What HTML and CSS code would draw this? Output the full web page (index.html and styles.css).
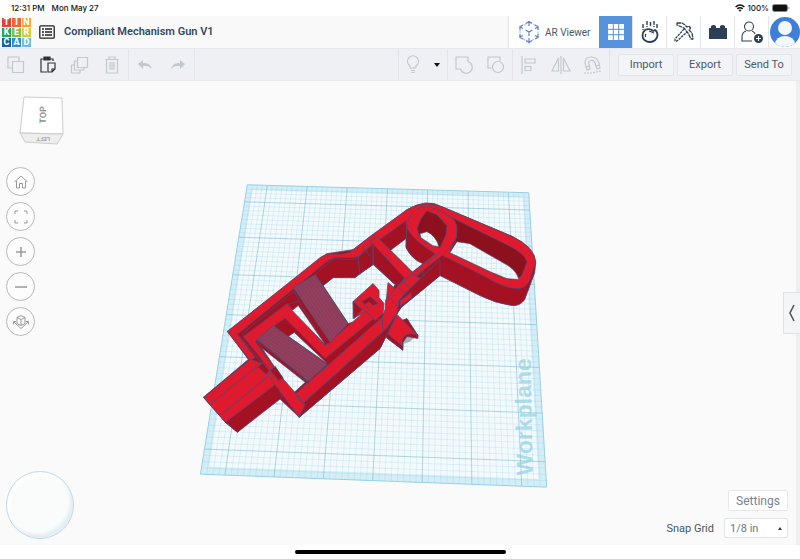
FILE: index.html
```
<!DOCTYPE html>
<html lang="en">

<head>
    <meta charset="UTF-8">
    <meta name="viewport" content="width=device-width, initial-scale=1.0">
    <title>Compliant Mechanism Gun V1</title>
    <link rel="stylesheet" href="styles.css">
</head>

<body>
    <div class="status-bar">
        <span class="time">12:31 PM</span>
        <span class="date">Mon May 27</span>
        <svg class="wifi" width="10" height="8" viewBox="0 0 10 8" fill="none" stroke="#111" stroke-width="1.5">
            <path d="M.6 3Q5-1 9.4 3M2.3 4.9Q5 2.6 7.7 4.9" />
            <path d="M3.6 6.2Q5 5 6.4 6.2L5 7.8z" fill="#111" stroke="none" />
        </svg>
        <span>100%</span>
        <svg width="18" height="8" viewBox="0 0 18 8">
            <rect x=".5" y=".5" width="15" height="7" rx="2" fill="#111" stroke="#888" />
            <path d="M16.5 2.5v3q1-.4 1-1.5t-1-1.5" fill="#888" />
        </svg>
    </div>

    <header class="header">
        <a href="#" class="logo" aria-label="Tinkercad">
            <span class="t1">T</span><span class="t2">I</span><span class="t3">N</span>
            <span class="t4">K</span><span class="t5">E</span><span class="t6">R</span>
            <span class="t7">C</span><span class="t8">A</span><span class="t9">D</span>
        </a>
        <button class="icon-btn list-btn" aria-label="Designs">
            <svg width="16" height="14" viewBox="0 0 16 14" fill="none" stroke="#222">
                <rect x=".8" y=".8" width="14.4" height="12.4" rx="1" stroke-width="1.3" />
                <path d="M3 4h2M3 7h2M3 10h2M6 4h7M6 7h7M6 10h7" stroke-width="1.6" />
            </svg>
        </button>
        <h1>Compliant Mechanism Gun V1</h1>
        <button class="ar-btn">
            <svg width="22" height="24" viewBox="0 0 22 24" fill="none" stroke="#5b83c9" stroke-width="1.2">
                <path d="M11 2L20 7V17L11 22L2 17V7z" stroke="#a9c6ea" stroke-dasharray="3 2" />
                <path d="M8 3.5L11 1.5L14 3.5M11 2V6M2 10V6.500L5 5M2 7L5 8.500M20 10V6.500L17 5M20 7L17 8.500M2 14V17.500L5 19M2 17L5 15.500M20 14V17.500L17 19M20 17L17 15.500M8 20.500L11 22.500L14 20.500M11 22V18M7.500 10L11 12L14.500 10M11 12V16" />
            </svg>
            <span>AR Viewer</span>
        </button>
        <button class="tab active" aria-label="3D view">
            <svg width="18" height="18" viewBox="0 0 18 18">
                <rect x="1" y="1" width="16" height="16" fill="#fff" />
                <path d="M1 6.300H17M1 11.700H17M6.300 1V17M11.700 1V17" stroke="#4f8fd9" stroke-width="1" />
            </svg>
        </button>
        <button class="tab" aria-label="Sim lab">
            <svg width="20" height="24" viewBox="0 0 20 24" fill="none" stroke="#2b4056" stroke-width="1.800">
                <path d="M11 9.500C6 8 2.500 11 2.500 15.500c0 4 3.500 6.500 7.500 6.500s7.500-3 7.500-7c0-2-1-4-2.500-5L13 11z" />
                <path d="M6 14q-1 1-.5 3M9 11l5 2" stroke-width="1.300" />
                <path d="M3 4v6M7 1v6M10.500 2v4M14 1v6M17 4v4" stroke-dasharray="4 1" stroke-width="1.400" />
            </svg>
        </button>
        <button class="tab" aria-label="Blocks">
            <svg width="22" height="22" viewBox="0 0 22 22" fill="none" stroke="#2b4056" stroke-width="1.300" stroke-linejoin="bevel">
                <path d="M4 2H9L12 4L14 6L16 5L17.500 7L16 9L19 12L20 18H18L15 12L11 7L4 4z" stroke-dasharray="4 .6" />
                <path d="M11 8L2 18V20H4L14 11" stroke-dasharray="2.500 .8" />
            </svg>
        </button>
        <button class="tab" aria-label="Bricks">
            <svg width="20" height="16" viewBox="0 0 20 16" fill="#2b4056">
                <path d="M1 4H3V2Q5.500 0 8 2V4H12V2Q14.500 0 17 2V4H19V15H1z" />
            </svg>
        </button>
        <button class="tab" aria-label="Invite people">
            <svg width="24" height="24" viewBox="0 0 24 24" fill="none" stroke="#2b4056" stroke-width="1.100">
                <circle cx="9" cy="6.500" r="4.500" />
                <path d="M12 21H2V17Q2 12.500 6 11M12 11Q14.500 12 15 14" />
                <circle cx="18.500" cy="18.500" r="4.500" fill="#2b4056" stroke="none" />
                <path d="M18.500 16V21M16 18.500H21" stroke="#fff" />
            </svg>
        </button>
        <button class="tab avatar" aria-label="Account">
            <svg width="30" height="32" viewBox="0 0 30 32">
                <defs>
                    <clipPath id="face"><circle cx="15" cy="16" r="15" /></clipPath>
                </defs>
                <g clip-path="url(#face)">
                    <rect width="30" height="32" fill="#3f7fdb" />
                    <circle cx="15" cy="12" r="7" fill="#f3f8ff" />
                    <ellipse cx="15" cy="28" rx="10" ry="8" fill="#f3f8ff" />
                </g>
            </svg>
        </button>
    </header>

    <div class="toolbar">
        <div class="group edit">
            <button class="tool" aria-label="Copy">
                <svg viewBox="0 0 20 20"><path d="M6 13H2V2H13V6M6.500 6.500H17.500V17.500H6.500z" /></svg>
            </button>
            <button class="tool dark" aria-label="Paste">
                <svg viewBox="0 0 20 20"><path d="M9 17H3V4H15V6M10 8H17V14L14 17H10zM14 17V14H17" /><path d="M6 2H12V5H6z" fill="#333" /></svg>
            </button>
            <button class="tool" aria-label="Duplicate">
                <svg viewBox="0 0 20 20"><path d="M7.500 2.500H17.500V12.500H7.500zM7 6H4.500V15H14V13M4 10H1.500V18H10V15" /></svg>
            </button>
            <button class="tool" aria-label="Delete">
                <svg viewBox="0 0 20 20"><path d="M3 4.500H17M7 4V2H13V4M4.500 5V18H15.500V5M8 7V15M10 7V15M12 7V15" /></svg>
            </button>
        </div>
        <div class="group history">
            <button class="tool" aria-label="Undo">
                <svg viewBox="0 0 20 20"><path d="M3 9L8 5V8Q15 7 17 14Q13 10 8 11V14z" fill="#c2c8d0" stroke="none" /></svg>
            </button>
            <button class="tool" aria-label="Redo">
                <svg viewBox="0 0 20 20"><path d="M17 9L12 5V8Q5 7 3 14Q7 10 12 11V14z" fill="#c2c8d0" stroke="none" /></svg>
            </button>
        </div>
        <div class="spacer"></div>
        <div class="group show">
            <button class="tool" aria-label="Show all">
                <svg viewBox="0 0 20 20"><path d="M7.500 13Q7.500 11 5.500 9.500A5.500 5.500 0 1 1 14.500 9.500Q12.500 11 12.500 13zM8 15.500H12M8.500 17.500H11.500" /></svg>
            </button>
            <button class="caret" aria-label="Visibility options"><svg width="6" height="4" viewBox="0 0 6 4"><path d="M0 0H6L3 4z" fill="#111" /></svg></button>
        </div>
        <div class="group pair">
            <button class="tool" aria-label="Group">
                <svg viewBox="0 0 20 20"><path d="M2 2H14V6.500A6 6 0 1 1 6.500 14H2z" /></svg>
            </button>
            <button class="tool" aria-label="Ungroup">
                <svg viewBox="0 0 20 20"><path d="M6 13H2V2H14V6" /><circle cx="12" cy="12" r="5.500" /></svg>
            </button>
        </div>
        <div class="group align">
            <button class="tool" aria-label="Align">
                <svg viewBox="0 0 20 20"><path d="M3 1V19M6 4H16V8H6zM6 11.500H12V15.500H6z" /></svg>
            </button>
            <button class="tool" aria-label="Mirror">
                <svg viewBox="0 0 20 20"><path d="M10 1V19M7.500 3V16H1zM12.500 3V16H19z" /></svg>
            </button>
            <button class="tool" aria-label="Cruise">
                <svg viewBox="0 0 20 20"><path d="M4 15L2 8Q2 2 8 2Q14 2 16 8L17 13L14 14L12 8Q11 5 8 5.500Q5 6 6 9L7 14zM3 12L6 11M13 11L16 10" /><path d="M1 18H8L18 16" stroke-dasharray="2 1" /></svg>
            </button>
        </div>
        <div class="actions">
            <button>Import</button>
            <button>Export</button>
            <button>Send To</button>
        </div>
    </div>

    <main class="stage">
        <svg class="scene" viewBox="0 80 800 465" role="img" aria-label="Workplane with model">
            <defs>
                <pattern id="ribs-a" width="3" height="3" patternUnits="userSpaceOnUse" patternTransform="rotate(-33)">
                    <rect width="3" height="3" fill="#a8304c" />
                    <path d="M.7 0V3" stroke="#6f5072" stroke-width="1.300" />
                </pattern>
                <pattern id="ribs-b" width="3" height="3" patternUnits="userSpaceOnUse" patternTransform="rotate(-58)">
                    <rect width="3" height="3" fill="#a8304c" />
                    <path d="M.7 0V3" stroke="#6f5072" stroke-width="1.300" />
                </pattern>
                <pattern id="cells" width="5" height="5" patternUnits="userSpaceOnUse" patternTransform="rotate(2)">
                    <rect width="5" height="5" fill="#f3fafd" />
                    <path d="M0 .5H5M.5 0V5" stroke="#cfe5ed" stroke-width=".7" />
                </pattern>
            </defs>
            <g id="plane"></g>
            <text class="plane-label" transform="translate(533 475) rotate(-91)">Workplane</text>

            <g class="model">
                <path class="shadow" d="M386 334L402 344L410 341L418 334L400 330z" />
                <!-- latch -->
                <path class="side" d="M386 326L407 318L418 335V338L407 336L403 342V350L386 337z" />
                <path class="top" d="M387 322L397 314L418 335Q405 330 402 340L403 346L385 331z" />
                <!-- side walls -->
                <path class="side" d="M203 397L248 359L227 331L327 253L353 249L407 209Q427 197 442 206L513 236Q534 247 536 262L535 272L525 299Q520 306 512 305Q496 303 480 295L440 275L401 307L396 315L388 332L380 348L299 417L278 397L237 432L225 422z" />
                <!-- top faces of the frame -->
                <path class="top" d="M227 331L290 281L320 257Q326 252 333 253Q346 255 353 249L371 235L407 209Q419 202 430 203L442 206L513 236Q536 247 536 262L530 280Q526 288 518 288Q505 288 487 277L441 254L403 288L396 312L387 323L302 402L299 410L273 380L278 373L295 394L382 317Q386 313 385 306L388 299L398 285L405 277L373 243L358 256L352 257L335 257L328 260L237 334L255 357L250 360z" />
                <!-- finger loop opening -->
                <path class="side inner" d="M444 213L503 242Q527 253 527 262L522 275Q517 281 507 278L490 271L450 252L457 235z" />
                <path class="gap" d="M457 241L470 243L503 262Q517 269 519 279L507 278L490 271L450 252z" />
                <!-- opening left of the ring -->
                <path class="side" d="M378 240L406 220L407 246Q412 257 423 263L412 272z" />
                <path class="gap" d="M390 250L406 238L406 246Q412 257 423 263L412 272z" />
                <!-- ring -->
                <path class="side" d="M407 225L406 247Q412 259 423 263L437 252L455 243L457 230z" />
                <path class="top" d="M412 213Q420 204 430 206Q444 211 454 219Q459 226 456 237Q451 248 441 256L413 277L405 277L437 254Q414 241 407 227Q407 219 412 213z" />
                <path class="side inner" d="M427 210L437 214L447 225L446 234L440 247L433 245L420 237L417 228L421 218z" />
                <path class="gap" d="M420 233L427 231Q436 235 439 246L433 245L421 237z" />
                <!-- cross bar -->
                <path class="gap" d="M323 285L333 277L355 277L373 264L395 284L386 300L388 312L348 323z" />
                <path class="side" d="M373 243L405 277L398 285L393 282L373 263z" />
                <path class="top" d="M370 240L377 236L413 272L405 278z" />
                <path class="side" d="M315 274L328 262L335 258L352 259L358 257L373 244V264L358 274L355 277H333L323 285z" />
                <path class="edge" d="M358 257L360 274M373 243V264M363 246L370 256M423 269V289" />
                <!-- rear chamber -->
                <path class="side" d="M242 333L293 291L301 300L287 304L245 340z" />
                <path class="top" d="M243 336L287 303L325 345L366 310L377 317L325 361L285 318L255 341L282 378L272 373z" />
                <path class="side" d="M285 318L325 358L375 317L380 320L327 366L284 340L272 326z" />
                <path class="gap" d="M288 336L294 332L327 363z" />
                <path class="side" d="M293 288L300 304L325 344L331 342L300 288z" />
                <path class="gap" d="M292 310L298 305L325 344z" />
                <path class="ribs" fill="url(#ribs-a)" d="M293 287L315 274L348 323L330 342z" />
                <path class="side" d="M256 339L307 382L302 388L266 355z" />
                <path class="gap" d="M262 348L305 382L293 393L277 374L282 378z" />
                <path class="ribs" fill="url(#ribs-b)" d="M257 339L273 325L327 364L308 381z" />
                <!-- trigger hook -->
                <path class="top" d="M353 301L373 283L379 290V297L384 303L383 313L375 320L366 311L353 318z" />
                <path class="side" d="M362 301L370 296L378 303L373 305L369 301L365 304z" />
                <path class="side" d="M353 301L362 309L354 318z" />
                <path class="top" d="M388 282L395 288L386 303z" />
                <path class="edge" d="M362 307L374 318M360 300L370 310" />
                <!-- front strip -->
                <path class="top" d="M398 285L413 274L421 278L407 291L399 300L397 313L387 327L303 403L295 394L382 317L385 309L386 299z" />
                <path class="side" d="M303 403L387 328L397 313L399 300L407 291L440 259V275L401 307L396 315L388 332L380 348L299 417z" />
                <path class="top" d="M400 300L411 292L412 297L400 306z" />
                <path class="edge" d="M389 298L398 306M397 286L407 294M402 281L411 287M295 394L305 411M382 317L383 330" />
                <!-- handle -->
                <path class="side" d="M225 422L277 382L282 397L237 432z" />
                <path class="top" d="M203 397L250 359L262 363L270 368L278 382L225 422z" />
                <path class="top" d="M270 378L278 373L305 404L299 417z" />
                <path class="side" d="M258 367L262 362L269 370L266 374zM275 366L283 378L278 380L270 370z" />
                <path class="edge" d="M211 403L258 365M220 415L265 378L271 371M236 332L262 363L257 366M295 394L305 406" />
            </g>
        </svg>

        <svg class="view-cube" width="46" height="50" viewBox="0 0 46 50">
            <path d="M5 1L43 2L44 38L1 37z" fill="#fff" stroke="#ccc" />
            <path d="M1 37L44 38L38 48L6 46z" fill="#eee" stroke="#ccc" />
            <text transform="translate(27 19) rotate(-88)" class="cube-top">TOP</text>
            <text transform="translate(31 41) rotate(180)" class="cube-left">LEFT</text>
        </svg>

        <nav class="view-nav">
            <button aria-label="Home view">
                <svg viewBox="0 0 16 16"><path d="M1.500 8L8 2L14.500 8M3.500 7V14H6.500V9.500H9.500V14H12.500V7" /></svg>
            </button>
            <button aria-label="Fit all">
                <svg viewBox="0 0 16 16"><path d="M2 5V2H5M11 2H14V5M14 11V14H11M5 14H2V11" /></svg>
            </button>
            <button aria-label="Zoom in">
                <svg viewBox="0 0 16 16"><path d="M8 3V13M3 8H13" stroke-width="1.500" /></svg>
            </button>
            <button aria-label="Zoom out">
                <svg viewBox="0 0 16 16"><path d="M2 8H14" stroke-width="1.500" /></svg>
            </button>
            <button aria-label="Perspective">
                <svg viewBox="0 0 16 16"><path d="M4 3.500L8 1.500L12 3.500V9.500L8 11.500L4 9.500zM4 3.500L8 5.500L12 3.500M8 5.500V11.500M1 8L8 14.500L15 8M.5 10.500V7.500H3M13 7.500H15.500V10.500" /></svg>
            </button>
        </nav>

        <div class="joystick"></div>

        <button class="drawer-toggle" aria-label="Show shapes">
            <svg width="8" height="18" viewBox="0 0 8 18"><path d="M6 1L2 9L6 17" fill="none" stroke="#555" stroke-width="1.600" /></svg>
        </button>

        <div class="grid-settings">
            <button class="settings-btn">Settings</button>
            <div class="snap-row">
                <label for="snap">Snap Grid</label>
                <select id="snap">
                    <option>1/16 in</option>
                    <option selected>1/8 in</option>
                    <option>1/4 in</option>
                </select>
            </div>
        </div>
    </main>

    <footer class="home-area"><div class="home-bar"></div></footer>

    <script src="script.js"></script>
</body>

</html>
```
FILE: styles.css
```
* {
    box-sizing: border-box;
}

body {
    margin: 0;
    min-height: 100vh;
    display: flex;
    flex-direction: column;
    background: #fff;
    font-family: Roboto, "Noto Sans", sans-serif;
    color: #34495e;
}

button {
    font-family: inherit;
    border: none;
    background: none;
    padding: 0;
    margin: 0;
    cursor: pointer;
}

svg {
    display: block;
    flex: none;
}

/* status bar */
.status-bar {
    display: flex;
    align-items: center;
    height: 16px;
    padding: 0 10px 0 11px;
    font-family: Inter, sans-serif;
    font-size: 8px;
    font-weight: 500;
    color: #111;
}

.date {
    margin-left: 7px;
}

.wifi {
    margin-left: auto;
}

.wifi + span {
    margin: 0 3px 0 2px;
}

/* header */
.header {
    display: flex;
    align-items: stretch;
    height: 32px;
    background: #f9f9f9;
}

.logo {
    display: grid;
    grid-template-columns: repeat(3, 9px);
    grid-template-rows: repeat(3, 9px);
    gap: 1px;
    margin: 2px 0 0 2px;
    text-decoration: none;
}

.logo span {
    color: #fff;
    font-size: 9px;
    font-weight: 800;
    line-height: 9px;
    text-align: center;
}

.t1 { background: #e5403a; }
.t2 { background: #f2653a; }
.t3 { background: #f8a13b; }
.t4 { background: #21a85a; }
.t5 { background: #7cc243; }
.t6 { background: #c9cf36; }
.t7 { background: #1560a8; }
.t8 { background: #2f8fd3; }
.t9 { background: #6bbde8; }

.list-btn {
    margin: 0 9px 0 8px;
}

h1 {
    margin: 0;
    font-size: 11px;
    font-weight: 600;
    line-height: 32px;
    white-space: nowrap;
    flex: 1;
}

.ar-btn {
    display: flex;
    align-items: center;
    gap: 5px;
    width: 91px;
    padding-left: 9px;
    background: #fff;
    border-left: 1px solid #e4e6ea;
    font-size: 10px;
    color: #4a5868;
    white-space: nowrap;
}

.tab {
    display: flex;
    align-items: center;
    justify-content: center;
    width: 33px;
    margin-right: 1px;
    background: #fff;
    box-shadow: 1px 0 #e4e6ea;
}

.tab.active {
    background: #5594dc;
}

.tab.avatar {
    width: 31px;
    margin: 0;
    box-shadow: none;
}

/* toolbar */
.toolbar {
    display: flex;
    align-items: stretch;
    height: 33px;
    background: #eff0f4;
    border-top: 1px solid #e6e8ee;
    border-bottom: 1px solid #e9eaee;
}

.group {
    display: flex;
    align-items: center;
    justify-content: space-around;
    border-right: 1px solid #e2e4e9;
}

.tool svg {
    width: 20px;
    height: 20px;
    fill: none;
    stroke: #c2c8d0;
    stroke-width: 1.2;
}

.tool.dark svg {
    stroke: #333;
}

.edit {
    width: 129px;
}

.history {
    width: 66px;
}

.show {
    width: 50px;
    border-left: 1px solid #e2e4e9;
}

.caret {
    padding: 6px 4px;
}

.pair {
    width: 65px;
}

.align {
    width: 97px;
}

.spacer {
    flex: 1;
}

.actions {
    display: flex;
    align-items: center;
    gap: 3px;
    padding: 0 8px;
}

.actions button {
    width: 56px;
    height: 22px;
    border: 1px solid #e2e4e8;
    border-radius: 2px;
    background: #f3f4f7;
    font-size: 11px;
    color: #4a5868;
}

/* 3d view */
.stage {
    position: relative;
    flex: 1;
    background: #fafafa;
    border-right: 4px solid #efefef;
}

.scene {
    position: absolute;
    top: 0;
    left: 0;
    width: calc(100% + 4px);
    height: 100%;
}

.plane-fill {
    fill: #d3eef7;
}

.plane-inner {
    fill: #f3fafd;
}

.plane-outline {
    fill: none;
    stroke: #98d0e4;
}

.minor {
    stroke: #6fb6cc;
    stroke-opacity: .24;
    stroke-width: .7;
}

.major {
    stroke: #5fa6bd;
    stroke-opacity: .5;
    stroke-width: .9;
}

.plane-label {
    font-family: "Liberation Sans", sans-serif;
    font-size: 23px;
    font-weight: 700;
    fill: #8fcfe2;
    fill-opacity: .7;
}

.model path {
    stroke-linejoin: round;
}

.top {
    fill: #e01a2e;
    stroke: #4c4a70;
    stroke-width: .8;
}

.side {
    fill: #a31123;
    stroke: #4c4a70;
    stroke-width: .8;
}

.side.inner {
    fill: #8c101e;
}

.gap {
    fill: url(#cells);
    stroke: #4c4a70;
    stroke-width: .6;
}

.ribs {
    stroke: #4c4a70;
    stroke-width: .8;
}

.edge {
    fill: none;
    stroke: #4c4a70;
    stroke-width: .9;
}

.shadow {
    fill: #3d4a55;
    fill-opacity: .4;
}

.view-cube {
    position: absolute;
    top: 15px;
    left: 19px;
}

.cube-top {
    font-size: 9px;
    font-weight: 700;
    fill: #999;
    text-anchor: middle;
}

.cube-left {
    font-size: 6px;
    font-weight: 700;
    fill: #aaa;
}

.view-nav {
    position: absolute;
    top: 86px;
    left: 6px;
    display: flex;
    flex-direction: column;
    gap: 6px;
}

.view-nav button {
    display: flex;
    align-items: center;
    justify-content: center;
    width: 29px;
    height: 29px;
    border: 1px solid #b8b8b8;
    border-radius: 50%;
    background: #fdfdfd;
}

.view-nav svg {
    width: 16px;
    height: 16px;
    fill: none;
    stroke: #999;
    stroke-width: 1;
}

.joystick {
    position: absolute;
    left: 6px;
    bottom: 6px;
    width: 68px;
    height: 68px;
    border: 1px solid #c6d9e3;
    border-radius: 50%;
    background: #fafcfc;
    box-shadow: inset -3px -4px 3px #e3eef3, inset 3px 3px 3px #fff;
}

.drawer-toggle {
    position: absolute;
    top: 211px;
    right: -4px;
    display: flex;
    align-items: center;
    justify-content: center;
    width: 17px;
    height: 42px;
    border: 1px solid #dfe2e6;
    border-right: none;
    background: #f3f5f7;
}

.grid-settings {
    position: absolute;
    right: 8px;
    bottom: 7px;
    display: flex;
    flex-direction: column;
    align-items: flex-end;
    gap: 7px;
}

.settings-btn {
    width: 60px;
    height: 21px;
    border: 1px solid #e6e8ea;
    border-radius: 2px;
    background: #fff;
    font-size: 12px;
    color: #7a838d;
}

.snap-row {
    position: relative;
    display: flex;
    align-items: center;
    gap: 10px;
    font-size: 11px;
    color: #4a5560;
}

.snap-row::after {
    content: "";
    position: absolute;
    right: 6px;
    top: 9px;
    border: 2px solid transparent;
    border-top: none;
    border-bottom: 3px solid #333;
}

select {
    appearance: none;
    width: 64px;
    height: 20px;
    padding: 0 5px;
    border: 1px solid #e0e2e4;
    border-radius: 1px;
    background: #fff;
    font-family: inherit;
    font-size: 11px;
    color: #6d757d;
}

/* home indicator */
.home-area {
    display: flex;
    justify-content: center;
    height: 14px;
    padding-top: 5px;
}

.home-bar {
    width: 211px;
    height: 4px;
    border-radius: 2px;
    background: #000;
}
```
FILE: script.js
```
// corners of the workplane: top left, top right, bottom right, bottom left
const corners = [[247, 184], [529, 192], [547, 487], [200, 474]];
const UNITS = 7;
const STEPS = 8;

const [[x0, y0], [x1, y1], [x2, y2], [x3, y3]] = corners;
const den = (x1 - x2) * (y3 - y2) - (x3 - x2) * (y1 - y2);
const sx = x0 - x1 + x2 - x3;
const sy = y0 - y1 + y2 - y3;
const g = (sx * (y3 - y2) - (x3 - x2) * sy) / den;
const h = ((x1 - x2) * sy - sx * (y1 - y2)) / den;

// plane coordinates (0..1) to screen
function project(u, v) {
    const w = g * u + h * v + 1;
    const x = (x1 - x0 + g * x1) * u + (x3 - x0 + h * x3) * v + x0;
    const y = (y1 - y0 + g * y1) * u + (y3 - y0 + h * y3) * v + y0;
    return (x / w).toFixed(1) + ' ' + (y / w).toFixed(1);
}

function quad(m) {
    return 'M' + [project(m, m), project(1 - m, m), project(1 - m, 1 - m), project(m, 1 - m)].join('L') + 'z';
}

let minor = '';
let major = '';
const total = UNITS * STEPS;
for (let i = 1; i < total; i++) {
    const t = i / total;
    const d = 'M' + project(t, 0) + 'L' + project(t, 1) + 'M' + project(0, t) + 'L' + project(1, t);
    if (i % STEPS === STEPS / 2) {
        major += d;
    } else {
        minor += d;
    }
}

document.getElementById('plane').innerHTML =
    `<path class="plane-fill" d="${quad(0)}"/>` +
    `<path class="plane-inner" d="${quad(0.022)}"/>` +
    `<path class="minor" d="${minor}"/>` +
    `<path class="major" d="${major}"/>` +
    `<path class="plane-outline" d="${quad(0)}"/>`;
```
